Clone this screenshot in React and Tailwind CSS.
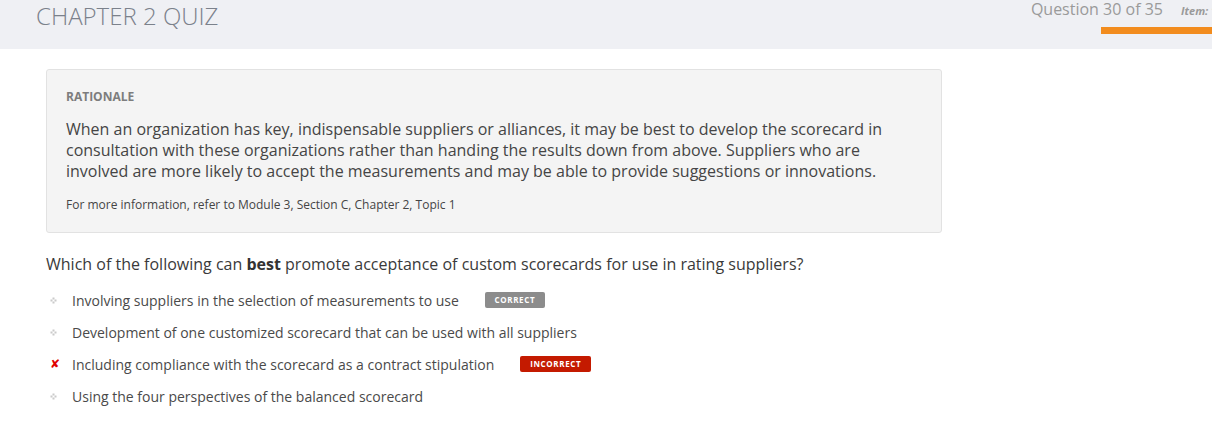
import React from "react";

const Bullet = () => (
  <svg width="7" height="7" viewBox="0 0 7 7" className="shrink-0">
    <rect x="2.5" y="0.5" width="2" height="2" fill="#cacaca" />
    <rect x="0.5" y="2.5" width="2" height="2" fill="#cacaca" />
    <rect x="4.5" y="2.5" width="2" height="2" fill="#cacaca" />
    <rect x="2.5" y="4.5" width="2" height="2" fill="#cacaca" />
  </svg>
);

const Option = ({ mark, text, badge }) => (
  <div className="flex items-center h-[32px]">
    <div className="w-[26px] flex items-center pl-[4px]">
      {mark === "x" ? (
        <span className="text-[#e00000] text-[12px] font-bold italic leading-none" style={{ fontFamily: "'DejaVu Sans', sans-serif" }}>✘</span>
      ) : (
        <Bullet />
      )}
    </div>
    <span className="text-[14px] text-[#4a4a4a]">{text}</span>
    {badge === "correct" && (
      <span className="ml-[26px] bg-[#8c8c8c] text-white text-[8px] font-bold tracking-[0.08em] rounded-[2px] w-[60px] h-[16px] flex items-center justify-center">
        CORRECT
      </span>
    )}
    {badge === "incorrect" && (
      <span className="ml-[26px] bg-[#c41a00] text-white text-[8px] font-bold tracking-[0.08em] rounded-[2px] w-[71px] h-[16px] flex items-center justify-center">
        INCORRECT
      </span>
    )}
  </div>
);

export default function App() {
  return (
    <div className="w-[1212px] h-[426px] bg-white overflow-hidden" style={{ fontFamily: "'Open Sans', sans-serif" }}>
      <header className="h-[49px] bg-[#eff0f4] flex justify-between">
        <h1 className="pl-[36px] text-[24px] font-light text-[#7b818b] leading-[32px]">CHAPTER 2 QUIZ</h1>
        <div className="flex flex-col items-end">
          <div className="flex items-baseline h-[20px] mt-[-1px]">
            <span className="text-[16px] text-[#9a9a9a] leading-[20px]">Question 30 of 35</span>
            <span className="ml-[18px] w-[31px] text-[11px] font-bold italic text-[#9a9a9a] whitespace-nowrap">Item: 1</span>
          </div>
          <div className="mt-[8px] w-[111px] h-[7px] bg-[#f28c1e]" />
        </div>
      </header>

      <main className="pl-[46px] pt-[20px]">
        <section className="w-[896px] bg-[#f4f4f4] border border-[#e2e2e2] rounded-[3px] px-[19px] pt-[18px] pb-[19px]">
          <div className="text-[12px] font-bold text-[#7d7d7d] leading-[17px]">RATIONALE</div>
          <p className="mt-[14px] text-[16px] text-[#454545] leading-[21px]">
            When an organization has key, indispensable suppliers or alliances, it may be best to develop the scorecard in consultation with these organizations rather than handing the results down from above. Suppliers who are involved are more likely to accept the measurements and may be able to provide suggestions or innovations.
          </p>
          <p className="mt-[14px] text-[12px] text-[#454545] leading-[17px]">
            For more information, refer to Module 3, Section C, Chapter 2, Topic 1
          </p>
        </section>

        <p className="mt-[20px] text-[16px] text-[#3a3a3a] leading-[22px]">
          Which of the following can <b className="font-bold text-[#333]">best</b> promote acceptance of custom scorecards for use in rating suppliers?
        </p>

        <div className="mt-[9px]">
          <Option text="Involving suppliers in the selection of measurements to use" badge="correct" />
          <Option text="Development of one customized scorecard that can be used with all suppliers" />
          <Option mark="x" text="Including compliance with the scorecard as a contract stipulation" badge="incorrect" />
          <Option text="Using the four perspectives of the balanced scorecard" />
        </div>
      </main>
    </div>
  );
}
